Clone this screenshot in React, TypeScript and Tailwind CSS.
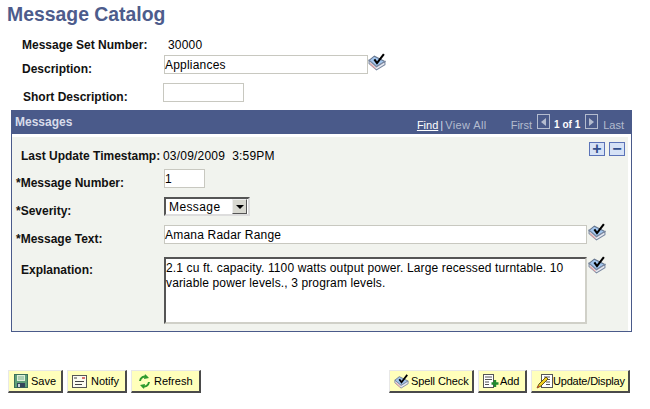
import React from 'react';

const BookCheck = ({ className = '' }: { className?: string }) => (
  <svg className={className} width="18" height="18" viewBox="0 0 17 17">
    <path d="M1 7 L6 3 L16 8 L8 13 Z" fill="#a3c6ee" stroke="#66768e" strokeWidth="1" />
    <path d="M1 7 L1 10 L8 16 L16 11 L16 8 L8 13 Z" fill="#e6e8f0" stroke="#7a88a0" strokeWidth="1" />
    <path d="M2 10 L7 14.5" stroke="#e8a8a8" strokeWidth="1.2" />
    <path d="M6 6 L8.5 9.5 L15 1" fill="none" stroke="#000" strokeWidth="2" />
  </svg>
);

const FloppyIcon = () => (
  <svg width="14" height="14" viewBox="0 0 14 14">
    <rect x="0.5" y="0.5" width="13" height="13" fill="#5f9f78" stroke="#3b6f5a" />
    <rect x="3" y="1" width="8" height="6" fill="#dff0d8" />
    <path d="M4 3 H10 M4 5 H10" stroke="#7fb08f" strokeWidth="1" />
    <rect x="3" y="9" width="8" height="4.5" fill="#33455a" />
    <rect x="4" y="10" width="2" height="3" fill="#c8d0d8" />
  </svg>
);

const NotifyIcon = () => (
  <svg width="15" height="13" viewBox="0 0 15 13">
    <rect x="0.5" y="0.5" width="14" height="12" fill="#fbfbf0" stroke="#555" />
    <path d="M2 3 H5 M3 6.5 H12 M3 9.5 H10" stroke="#444" strokeWidth="1" />
    <rect x="10" y="2" width="3" height="2" fill="#d9706f" />
  </svg>
);

const RefreshIcon = () => (
  <svg width="13" height="15" viewBox="0 0 13 15">
    <path d="M2 7 A5 5 0 0 1 9 3" fill="none" stroke="#2e9a2e" strokeWidth="2" />
    <path d="M7 0 L11 4 L6 5 Z" fill="#2e9a2e" />
    <path d="M11 8 A5 5 0 0 1 4 12" fill="none" stroke="#2e9a2e" strokeWidth="2" />
    <path d="M6 15 L2 11 L7 10 Z" fill="#2e9a2e" />
  </svg>
);

const AddIcon = () => (
  <svg width="17" height="14" viewBox="0 0 17 14">
    <rect x="0.5" y="0.5" width="10" height="13" fill="#fff" stroke="#555" />
    <path d="M2 3 H9 M2 5.5 H9 M2 8 H6 M2 10.5 H6" stroke="#555" strokeWidth="1" />
    <path d="M12 6 V13 M8.5 9.5 H15.5" stroke="#1f8a2e" strokeWidth="2.4" />
  </svg>
);

const UpdateIcon = () => (
  <svg width="17" height="15" viewBox="0 0 17 15">
    <rect x="5.5" y="0.5" width="11" height="13" fill="#fff" stroke="#555" />
    <path d="M8 3 H14 M10 5.5 H14 M10 8 H14 M10 10.5 H14" stroke="#555" strokeWidth="1" />
    <path d="M1 14 L3 10 L10 3 L12 5 L5 12 Z" fill="#f0d020" stroke="#5a4a10" strokeWidth="0.9" />
    <path d="M1 14 L2 11.5 L3.5 13 Z" fill="#d04a30" />
  </svg>
);

const ActionButton = ({ icon, label, className = '' }: { icon: React.ReactNode; label: string; className?: string }) => (
  <button className={`h-[23px] flex items-center gap-[3px] whitespace-nowrap bg-[#ffffbb] border border-t-[#e8e8e8] border-l-[#e8e8e8] border-b-2 border-r-2 border-b-[#4a4a4a] border-r-[#4a4a4a] text-[11px] text-black ${className}`}>
    {icon}
    <span>{label}</span>
  </button>
);

const fieldClass = 'h-[19px] border border-[#c8c8c0] bg-white text-[12px] tracking-[0.2px] text-black flex items-center';
const labelClass = 'text-[12px] font-bold text-[#111]';

export default function App() {
  return (
    <div className="w-[650px] h-[409px] bg-white font-['Liberation_Sans',Arial,sans-serif] overflow-hidden">
      <h1 className="pl-[7px] pt-[3px] text-[19.4px] leading-[22px] font-bold text-[#4d5c8c]">Message Catalog</h1>

      <div className="mt-[11px] h-[70px] flex flex-col">
        <div className="flex h-[18px] items-center">
          <span className={`${labelClass} ml-[22px] w-[146px]`}>Message Set Number:</span>
          <span className="text-[12px] tracking-[0.2px] text-black">30000</span>
        </div>
        <div className="flex h-[20px] mt-[1px]">
          <span className={`${labelClass} ml-[22px] w-[142px] pt-[5px]`}>Description:</span>
          <div className={`${fieldClass} w-[204px]`}>Appliances</div>
          <BookCheck className="-mt-[2px]" />
        </div>
        <div className="flex h-[20px] mt-[8px]">
          <span className={`${labelClass} ml-[23px] w-[140px] pt-[5px]`}>Short Description:</span>
          <div className={`${fieldClass} w-[81px]`}></div>
        </div>
      </div>

      <section className="mt-[4px] ml-[11px] w-[621px] h-[222px] border border-[#4a5a8a] border-t-0 flex flex-col">
        <div className="h-[24px] bg-[#4a5a8a] flex justify-between pl-[3px] pr-[7px]">
          <span className="self-center text-[12px] font-bold text-[#d8dcea]">Messages</span>
          <div className="flex items-end pb-[1px] text-[11px] leading-[16px] text-[#b4bccf]">
            <span className="text-white underline">Find</span>
            <span className="mx-[2px] text-[#d8dcea]">|</span>
            <span className="tracking-[0.4px]">View All</span>
            <span className="ml-[24px]">First</span>
            <span className="ml-[5px] mb-[4px] w-[13px] h-[15px] border border-[#b4bccf] flex items-center justify-center">
              <span className="w-0 h-0 border-y-[4px] border-y-transparent border-r-[5px] border-r-[#b4bccf]"></span>
            </span>
            <span className="ml-[4px] text-[10px] font-bold text-white">1 of 1</span>
            <span className="ml-[5px] mb-[4px] w-[13px] h-[15px] border border-[#b4bccf] flex items-center justify-center">
              <span className="w-0 h-0 border-y-[4px] border-y-transparent border-l-[5px] border-l-[#b4bccf]"></span>
            </span>
            <span className="ml-[5px]">Last</span>
          </div>
        </div>
        <div className="flex-1 bg-white pr-[3px] pt-[3px]">
          <div className="h-full bg-[#f1f3ee] pt-[8px] flex flex-col">
            <div className="flex h-[22px] items-center">
              <span className={`${labelClass} ml-[9px] w-[142px]`}>Last Update Timestamp:</span>
              <span className="text-[12px] tracking-[0.2px] text-black">03/09/2009&nbsp; 3:59PM</span>
              <div className="ml-auto mr-[3px] flex gap-[4px] self-start -mt-[3px]">
                <span className="w-[16px] h-[14px] bg-[#d6e2f6] border border-[#5b73b8] flex items-center justify-center text-[#33508c] text-[16px] leading-none font-bold">+</span>
                <span className="w-[16px] h-[14px] bg-[#d6e2f6] border border-[#5b73b8] flex items-center justify-center text-[#33508c] text-[16px] leading-none font-bold">−</span>
              </div>
            </div>
            <div className="flex h-[19px] mt-[2px]">
              <span className={`${labelClass} ml-[4px] w-[148px] pt-[5px]`}>*Message Number:</span>
              <div className={`${fieldClass} w-[41px]`}>1</div>
            </div>
            <div className="flex h-[19px] mt-[9px]">
              <span className={`${labelClass} ml-[4px] w-[148px] pt-[5px]`}>*Severity:</span>
              <div className="w-[86px] h-[19px] border-2 border-t-[#555] border-l-[#555] border-r-[#ddd] border-b-[#ddd] bg-white flex items-center justify-between pl-[3px] pr-[1px] text-[12px] tracking-[0.4px] text-black">
                <span>Message</span>
                <span className="w-[15px] h-[15px] bg-[#d8d8d0] border border-t-[#eee] border-l-[#eee] border-r-[#555] border-b-[#555] flex items-center justify-center">
                  <span className="w-0 h-0 border-x-[4px] border-x-transparent border-t-[4px] border-t-black"></span>
                </span>
              </div>
            </div>
            <div className="flex h-[19px] mt-[9px]">
              <span className={`${labelClass} ml-[4px] w-[148px] pt-[5px]`}>*Message Text:</span>
              <div className={`${fieldClass} w-[423px]`}>Amana Radar Range</div>
              <BookCheck className="ml-[1px] -mt-[2px]" />
            </div>
            <div className="flex mt-[13px]">
              <span className={`${labelClass} ml-[9px] w-[143px] pt-[4px]`}>Explanation:</span>
              <div className="w-[423px] h-[67px] border-2 border-t-[#555] border-l-[#555] border-r-[#d0d0c8] border-b-[#d0d0c8] bg-white pt-[2px] text-[12px] tracking-[0.13px] leading-[15px] text-black">
                2.1 cu ft. capacity. 1100 watts output power. Large recessed turntable. 10 variable power levels., 3 program levels.
              </div>
              <BookCheck className="ml-[1px] -mt-[1px]" />
            </div>
          </div>
        </div>
      </section>

      <footer className="mt-[38px] flex justify-between pl-[8px] pr-[20px]">
        <div className="flex gap-[4px]">
          <ActionButton icon={<FloppyIcon />} label="Save" className="w-[55px] pl-[5px]" />
          <ActionButton icon={<NotifyIcon />} label="Notify" className="w-[60px] pl-[4px] !gap-[4px]" />
          <ActionButton icon={<RefreshIcon />} label="Refresh" className="w-[70px] pl-[6px]" />
        </div>
        <div className="flex gap-[4px]">
          <ActionButton icon={<BookCheck className="w-[15px] h-[15px]" />} label="Spell Check" className="w-[85px] pl-[4px] !gap-[2px] tracking-[-0.1px]" />
          <ActionButton icon={<AddIcon />} label="Add" className="w-[49px] pl-[4px] !gap-0 tracking-[-0.1px]" />
          <ActionButton icon={<UpdateIcon />} label="Update/Display" className="w-[99px] pl-[4px] !gap-0 tracking-[-0.2px]" />
        </div>
      </footer>
    </div>
  );
}
